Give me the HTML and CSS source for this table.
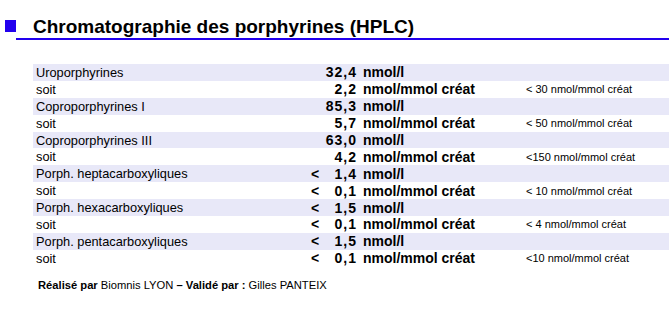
FILE: index.html
```html
<!DOCTYPE html>
<html>
<head>
<meta charset="utf-8">
<link rel="stylesheet" href="styles.css">
</head>
<body>
<div class="page">
  <div class="header">
    <span class="bullet"></span>
    <h1 class="title">Chromatographie des porphyrines (HPLC)</h1>
  </div>
  <div class="rule"></div>
  <div class="table">
    <div class="row shade"><span class="label">Uroporphyrines</span><span class="value"><span class="lt"></span><span class="num">32,4</span></span><span class="unit">nmol/l</span><span class="ref"></span></div>
    <div class="row"><span class="label">soit</span><span class="value"><span class="lt"></span><span class="num">2,2</span></span><span class="unit">nmol/mmol créat</span><span class="ref">&lt; 30 nmol/mmol créat</span></div>
    <div class="row shade"><span class="label">Coproporphyrines I</span><span class="value"><span class="lt"></span><span class="num">85,3</span></span><span class="unit">nmol/l</span><span class="ref"></span></div>
    <div class="row"><span class="label">soit</span><span class="value"><span class="lt"></span><span class="num">5,7</span></span><span class="unit">nmol/mmol créat</span><span class="ref">&lt; 50 nmol/mmol créat</span></div>
    <div class="row shade"><span class="label">Coproporphyrines III</span><span class="value"><span class="lt"></span><span class="num">63,0</span></span><span class="unit">nmol/l</span><span class="ref"></span></div>
    <div class="row"><span class="label">soit</span><span class="value"><span class="lt"></span><span class="num">4,2</span></span><span class="unit">nmol/mmol créat</span><span class="ref">&lt;150 nmol/mmol créat</span></div>
    <div class="row shade"><span class="label">Porph. heptacarboxyliques</span><span class="value"><span class="lt">&lt;</span><span class="num">1,4</span></span><span class="unit">nmol/l</span><span class="ref"></span></div>
    <div class="row"><span class="label">soit</span><span class="value"><span class="lt">&lt;</span><span class="num">0,1</span></span><span class="unit">nmol/mmol créat</span><span class="ref">&lt; 10 nmol/mmol créat</span></div>
    <div class="row shade"><span class="label">Porph. hexacarboxyliques</span><span class="value"><span class="lt">&lt;</span><span class="num">1,5</span></span><span class="unit">nmol/l</span><span class="ref"></span></div>
    <div class="row"><span class="label">soit</span><span class="value"><span class="lt">&lt;</span><span class="num">0,1</span></span><span class="unit">nmol/mmol créat</span><span class="ref">&lt; 4 nmol/mmol créat</span></div>
    <div class="row shade"><span class="label">Porph. pentacarboxyliques</span><span class="value"><span class="lt">&lt;</span><span class="num">1,5</span></span><span class="unit">nmol/l</span><span class="ref"></span></div>
    <div class="row"><span class="label">soit</span><span class="value"><span class="lt">&lt;</span><span class="num">0,1</span></span><span class="unit">nmol/mmol créat</span><span class="ref">&lt;10 nmol/mmol créat</span></div>
  </div>
  <p class="footer"><b>Réalisé par</b> Biomnis LYON <b>– Validé par :</b> Gilles PANTEIX</p>
</div>
</body>
</html>
```
FILE: styles.css
```css
html, body {
  margin: 0;
  padding: 0;
  background: #ffffff;
}
body {
  font-family: "Liberation Sans", Arial, sans-serif;
  color: #000;
}
.page {
  width: 669px;
  height: 315px;
  overflow: hidden;
}
.header {
  display: flex;
  align-items: center;
  padding: 14px 0 0 5px;
  height: 24px;
}
.bullet {
  width: 11px;
  height: 12px;
  background: #2200ee;
  flex: none;
}
.title {
  margin: 1px 0 0 17px;
  font-size: 19px;
  font-weight: bold;
  line-height: 24px;
}
.rule {
  margin: 0 0 0 16px;
  height: 2px;
  background: #2200ee;
}
.table {
  margin: 24px 0 0 33px;
}
.row {
  display: grid;
  grid-template-columns: 278px 46px 169px 1fr;
  height: 16.9px;
  align-items: center;
  font-size: 12.8px;
}
.row.shade {
  background: #e8e8f8;
}
.label {
  padding-left: 3px;
}
.value {
  display: flex;
  justify-content: space-between;
  font-weight: bold;
  font-size: 14px;
}
.num {
  letter-spacing: 1px;
}
.unit {
  padding-left: 6px;
  font-weight: bold;
  font-size: 14px;
}
.ref {
  font-size: 11px;
}
.footer {
  margin: 12px 0 0 38px;
  font-size: 11.2px;
}
```
